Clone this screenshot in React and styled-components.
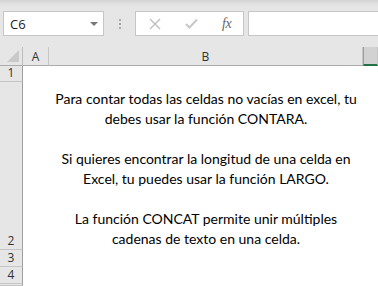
import React from "react";
import styled, { createGlobalStyle } from "styled-components";

const GlobalStyle = createGlobalStyle`
  html, body {
    margin: 0;
    padding: 0;
    background: #fff;
    overflow: hidden;
  }
`;

const lines = [
  "Para contar todas las celdas no vacías en excel, tu",
  "debes usar la función CONTARA.",
  "",
  "Si quieres encontrar la longitud de una celda en",
  "Excel, tu puedes usar la función LARGO.",
  "",
  "La función CONCAT permite unir múltiples",
  "cadenas de texto en una celda.",
];

export default function App() {
  return (
    <Window>
      <GlobalStyle />
      <FormulaBar>
        <NameBox>
          <span>C6</span>
          <Caret />
        </NameBox>
        <Grip>
          <i />
          <i />
          <i />
        </Grip>
        <FxButtons>
          <svg width="12" height="12" viewBox="0 0 12 12">
            <path d="M1 1 L11 11 M11 1 L1 11" stroke="#bdbdbd" strokeWidth="1.4" fill="none" />
          </svg>
          <svg width="13" height="11" viewBox="0 0 13 11">
            <path d="M1 6 L4.5 9.5 L12 1.5" stroke="#c8c8c8" strokeWidth="2" fill="none" />
          </svg>
          <FxLabel>fx</FxLabel>
        </FxButtons>
        <FormulaInput />
      </FormulaBar>

      <Sheet>
        <Corner />
        <ColHeader>A</ColHeader>
        <ColHeader>B</ColHeader>
        <ColHeader $active />

        <RowHeader>1</RowHeader>
        <Cell />
        <Cell />
        <Cell />

        <RowHeader>2</RowHeader>
        <Cell />
        <TextCell>
          {lines.map((l, i) => (
            <Line key={i}>{l || "\u00a0"}</Line>
          ))}
        </TextCell>
        <Cell />

        <RowHeader>3</RowHeader>
        <Cell />
        <Cell />
        <Cell />

        <RowHeader>4</RowHeader>
        <Cell />
        <Cell />
        <Cell />

        <RowHeader />
        <Cell />
        <Cell />
        <Cell />
      </Sheet>
    </Window>
  );
}

const Window = styled.div`
  width: 378px;
  height: 286px;
  display: flex;
  flex-direction: column;
  background: #fff;
  overflow: hidden;
  font-family: "Open Sans", "Noto Sans", sans-serif;
`;

const FormulaBar = styled.div`
  height: 47px;
  box-sizing: border-box;
  padding: 11px 0 0 3px;
  display: flex;
  align-items: flex-start;
  background: linear-gradient(#d3d3d3 0px, #e2e2e2 4px, #e6e6e6 8px);
`;

const Box = styled.div`
  height: 25px;
  box-sizing: border-box;
  background: #fff;
  border: 1px solid #c6c6c6;
`;

const NameBox = styled(Box)`
  width: 101px;
  display: flex;
  align-items: center;
  justify-content: space-between;
  padding: 0 5px 0 6px;
  font-size: 13px;
  color: #222;
`;

const Caret = styled.div`
  width: 0;
  height: 0;
  border-left: 4px solid transparent;
  border-right: 4px solid transparent;
  border-top: 4px solid #777;
`;

const Grip = styled.div`
  width: 31px;
  height: 25px;
  display: flex;
  flex-direction: column;
  align-items: center;
  justify-content: center;
  gap: 2px;

  i {
    width: 2px;
    height: 2px;
    background: #a8a8a8;
  }
`;

const FxButtons = styled(Box)`
  width: 109px;
  display: flex;
  align-items: center;
  padding: 0 0 0 13px;
  gap: 24px;
`;

const FxLabel = styled.span`
  font-family: "Liberation Serif", "DejaVu Serif", serif;
  font-style: italic;
  font-size: 14px;
  color: #666;
  letter-spacing: -0.5px;
`;

const FormulaInput = styled(Box)`
  flex: 1;
  margin-left: 4px;
  border-right: none;
`;

const Sheet = styled.div`
  flex: 1;
  display: grid;
  grid-template-columns: 23px 26px 314px 1fr;
  grid-template-rows: 19px 16px 168px 17px 17px 1fr;
  background: #fff;
`;

const Corner = styled.div`
  background: #e6e6e6;
  border-right: 1px solid #bdbdbd;
  border-bottom: 1px solid #ababab;
  position: relative;

  &::after {
    content: "";
    position: absolute;
    right: 3px;
    bottom: 3px;
    width: 0;
    height: 0;
    border-left: 12px solid transparent;
    border-bottom: 12px solid #c9c9c9;
  }
`;

const ColHeader = styled.div`
  background: ${(p) => (p.$active ? "#d2d2d2" : "#e6e6e6")};
  border-right: 1px solid #c6c6c6;
  border-bottom: ${(p) => (p.$active ? "2px solid #217346" : "1px solid #ababab")};
  border-left: ${(p) => (p.$active ? "1px solid #9e9e9e" : "none")};
  display: flex;
  align-items: center;
  justify-content: center;
  font-size: 12px;
  color: #333;
`;

const RowHeader = styled.div`
  background: #e6e6e6;
  border-right: 1px solid #9e9e9e;
  border-bottom: 1px solid #c6c6c6;
  display: flex;
  align-items: flex-end;
  justify-content: center;
  font-size: 12px;
  line-height: 16px;
  color: #333;
`;

const Cell = styled.div`
  background: #fff;
`;

const TextCell = styled.div`
  display: flex;
  flex-direction: column;
  justify-content: flex-end;
  align-items: center;
  padding-bottom: 1px;
  font-family: "Lato", "Liberation Sans", sans-serif;
  font-size: 14px;
  color: #000;
`;

const Line = styled.div`
  line-height: 20px;
  white-space: nowrap;
`;
